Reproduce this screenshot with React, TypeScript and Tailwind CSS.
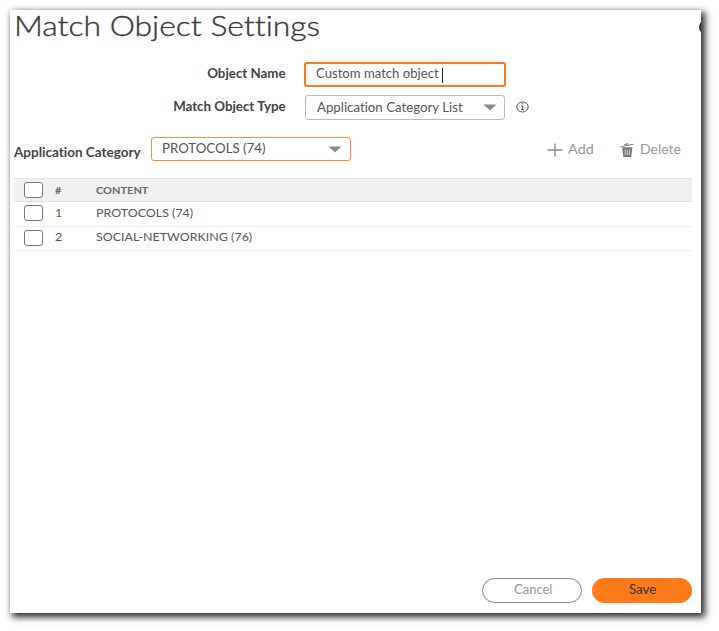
import type { ReactNode } from "react";

const rows = [
  { id: 1, content: "PROTOCOLS (74)", height: "h-[25px] pb-[2px]", text: "pt-[2px]", tint: "text-[#7a5a3a]" },
  { id: 2, content: "SOCIAL-NETWORKING (76)", height: "h-[24px] pb-px", text: "", tint: "text-[#555]" },
];

function T({ className = "", children }: { className?: string; children: ReactNode }) {
  return <span className={`inline-block origin-left whitespace-pre ${className}`}>{children}</span>;
}

function Caret() {
  return (
    <svg width="14" height="7" viewBox="0 0 14 7" className="shrink-0">
      <path d="M0.5 0.5h13L7 6.5z" fill="#888" />
    </svg>
  );
}

function Box() {
  return <span className="h-[16px] w-[19px] shrink-0 rounded-[3px] border border-[#777] bg-white" />;
}

export default function App() {
  return (
    <div className="h-[631px] w-[719px] overflow-hidden bg-white pl-[10px] pt-[10px] font-['Lato',sans-serif] text-[12.5px] text-[#555] [font-variant-ligatures:none]">
      <div className="flex h-[603px] w-[691px] flex-col bg-white pl-[4px] shadow-[3px_3px_7px_1px_rgba(0,0,0,0.85)]">
        <div className="flex h-[52px] justify-between overflow-hidden">
          <h1 className="text-[27px] leading-[32px] font-light text-[#3a3a3a] [-webkit-text-stroke:0.35px_#3a3a3a]">
            <T className="scale-x-[1.18]">Match Object Settings</T>
          </h1>
          <span className="mt-[10px] -mr-[12px] h-[14px] w-[14px] shrink-0 rounded-full bg-[#333]" />
        </div>

        <div className="flex h-[25px]">
          <div className="flex w-[272px] justify-end pt-[3px] leading-[18px] font-bold text-[#444]">
            <T className="origin-right scale-x-[1.065]">Object Name</T>
          </div>
          <div className="ml-[18px] flex h-[25px] w-[202px] items-center rounded-[3px] border-2 border-[#ff7a1a] pb-[1px] pl-[10px]">
            <T className="w-[126px] scale-x-[1.05]">Custom match object</T>
            <span className="mt-[2px] h-[15px] w-px bg-[#222]" />
          </div>
        </div>

        <div className="mt-[8px] flex h-[25px]">
          <div className="flex w-[272px] justify-end pt-[3px] leading-[18px] font-bold text-[#444]">
            <T className="origin-right scale-x-[1.065]">Match Object Type</T>
          </div>
          <div className="ml-[19px] flex h-[25px] w-[200px] items-center justify-between rounded-[3px] border border-[#bbb] pr-[7px] pl-[11px]">
            <T className="scale-x-[1.06] pt-[2px]">Application Category List</T>
            <Caret />
          </div>
          <svg width="13" height="12" viewBox="0 0 13 12" className="mt-[6px] ml-[11px]" fill="none" stroke="#555">
            <ellipse cx="6.5" cy="6" rx="5.7" ry="5" />
            <path d="M5.2 5h1.5v3.7M5 8.7h3.2M6 2.7h1.2" />
          </svg>
        </div>

        <div className="mt-[17px] flex h-[25px]">
          <div className="w-[137px] pt-[7px] leading-[18px] font-bold text-[#444]">
            <T className="scale-x-[1.08]">Application Category</T>
          </div>
          <div className="flex h-[24px] w-[200px] items-center justify-between rounded-[3px] border border-[#ff8a35] pr-[8px] pl-[10px]">
            <T className="scale-x-[1.06] pt-px">PROTOCOLS (74)</T>
            <Caret />
          </div>
          <div className="ml-[196px] flex items-center text-[#999]">
            <svg width="16" height="14" viewBox="0 0 16 14" fill="none" stroke="#888" strokeWidth="1.4">
              <path d="M8 0.5v13M0.5 7h15" />
            </svg>
            <div className="ml-[5px] w-[52px]"><T className="scale-x-[1.16] pt-px">Add</T></div>
            <svg width="14" height="14" viewBox="0 0 14 14">
              <path d="M0 3.4L13.5 .8v1L0 4.3zM4 2.2l.4-1.3L8 .2l.8 1.1z" fill="#777" />
              <path d="M2 4.3h10.5L11.2 14H3.4z" fill="#777" />
              <path d="M5 6.5l.3 5.5M7.3 6.5V12M9.8 6.5L9.4 12" stroke="#ddd" strokeWidth=".9" />
            </svg>
            <T className="ml-[6px] scale-x-[1.12] pt-px">Delete</T>
          </div>
        </div>

        <div className="mt-[16px] w-[678px] text-[10.5px]">
          <div className="flex h-[24px] items-center border-y border-[#e2e2e2] bg-[#f0f0f0] pl-[10px] text-[10px] font-bold text-[#666]">
            <Box />
            <span className="ml-[12px] w-[41px]"><T className="scale-x-[1.1]">#</T></span>
            <T className="scale-x-[1.1]">CONTENT</T>
          </div>
          {rows.map((r) => (
            <div key={r.id} className={`flex items-center border-b border-[#eee] pl-[10px] ${r.height}`}>
              <Box />
              <span className={`ml-[12px] w-[41px] ${r.text} ${r.tint}`}><T className="scale-x-[1.19]">{r.id}</T></span>
              <T className={`scale-x-[1.185] ${r.text}`}>{r.content}</T>
            </div>
          ))}
        </div>

        <div className="mt-auto mr-[9px] mb-[10px] flex justify-end gap-[10px]">
          <button className="h-[25px] w-[100px] rounded-full border border-[#888] text-[#999]">
            <T className="origin-center scale-x-[1.04]">Cancel</T>
          </button>
          <button className="h-[25px] w-[100px] rounded-full bg-[#ff7a1a] text-[#333]">
            <T className="origin-center scale-x-[1.06]">Save</T>
          </button>
        </div>
      </div>
    </div>
  );
}
